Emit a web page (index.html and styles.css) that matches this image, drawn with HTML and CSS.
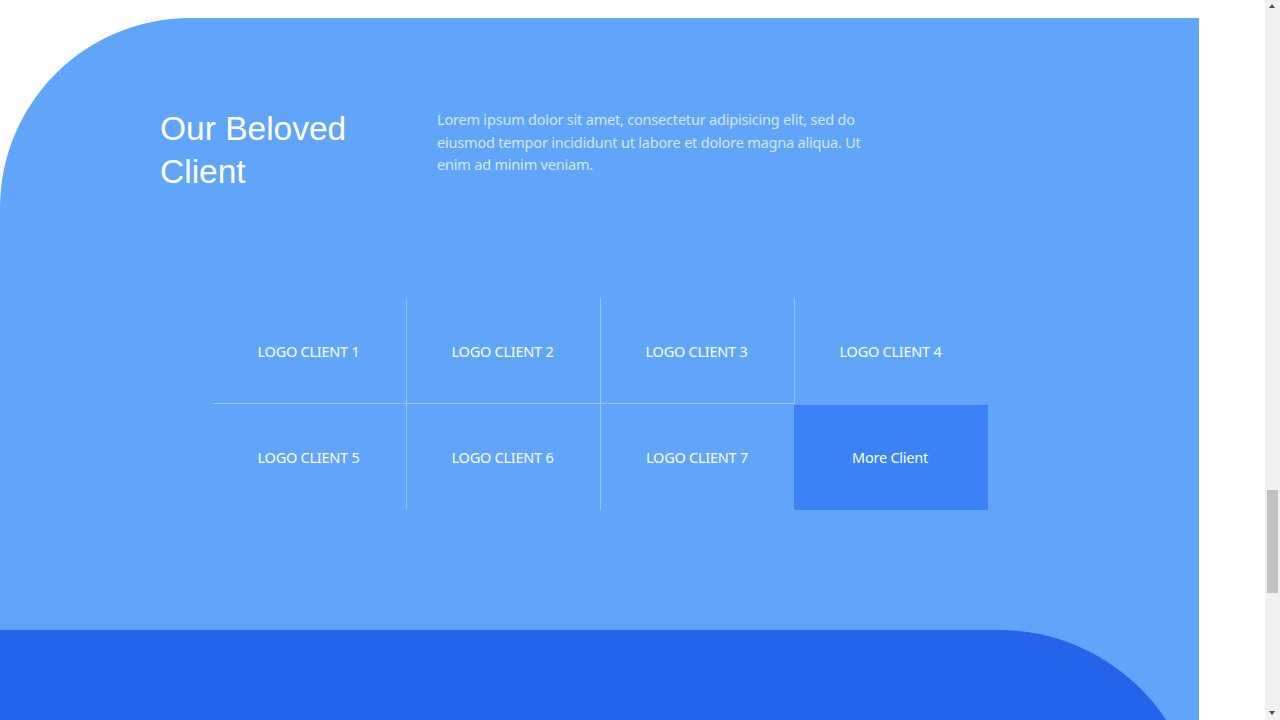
FILE: index.html
```html
<!DOCTYPE html>
<html lang="en">
<head>
<meta charset="utf-8">
<title>Our Beloved Client</title>
<link rel="stylesheet" href="styles.css">
</head>
<body>
  <div class="page">
    <div class="band">
      <section class="clients">
        <div class="clients-head">
          <h2 class="clients-title">Our Beloved Client</h2>
          <p class="clients-text">Lorem ipsum dolor sit amet, consectetur adipisicing elit, sed do eiusmod tempor incididunt ut labore et dolore magna aliqua. Ut enim ad minim veniam.</p>
        </div>
        <div class="logo-grid">
          <div class="logo-cell br bb">LOGO CLIENT 1</div>
          <div class="logo-cell br bb">LOGO CLIENT 2</div>
          <div class="logo-cell br bb">LOGO CLIENT 3</div>
          <div class="logo-cell">LOGO CLIENT 4</div>
          <div class="logo-cell br">LOGO CLIENT 5</div>
          <div class="logo-cell br">LOGO CLIENT 6</div>
          <div class="logo-cell">LOGO CLIENT 7</div>
          <div class="logo-cell more">More Client</div>
        </div>
      </section>
      <section class="next"></section>
    </div>
  </div>
  <div class="scrollbar" aria-hidden="true">
    <span class="sb-arrow sb-up"></span>
    <span class="sb-thumb"></span>
    <span class="sb-arrow sb-down"></span>
  </div>
</body>
</html>
```
FILE: styles.css
```css
html, body {
  margin: 0;
  padding: 0;
  background: #ffffff;
}

.page {
  padding-top: 18px;
}

.band {
  width: 1199px;
  background: #60a5fa;
  border-top-left-radius: 190px;
}

.clients {
  padding: 89px 0 120px 160px;
}

.clients-head {
  width: 880px;
  display: flex;
  align-items: flex-start;
  gap: 27px;
}

.clients-title {
  flex: 0 0 250px;
  margin: 0;
  font-family: "Liberation Sans", Arial, sans-serif;
  font-weight: 400;
  font-size: 33.5px;
  line-height: 43px;
  color: #ffffff;
}

.clients-text {
  margin: 1px 0 0;
  width: 440px;
  font-family: "Noto Sans", "Open Sans", sans-serif;
  font-size: 14.5px;
  line-height: 22.5px;
  letter-spacing: -0.2px;
  color: #d6e7fc;
}

.logo-grid {
  width: 775px;
  margin: 105px 0 0 53px;
  display: grid;
  grid-template-columns: 194px 194px 194px 193px;
  grid-auto-rows: 106px;
}

.logo-cell {
  display: flex;
  align-items: center;
  justify-content: center;
  padding-right: 2px;
  font-family: "Noto Sans", "Open Sans", sans-serif;
  font-size: 14.5px;
  letter-spacing: -0.25px;
  color: #ffffff;
  box-sizing: border-box;
}

.br {
  border-right: 1px solid rgba(255, 255, 255, 0.35);
}

.bb {
  border-bottom: 1px solid rgba(255, 255, 255, 0.35);
}

.more {
  background: #3b82f6;
  margin: 1px 0 0 -1px;
  padding-bottom: 1px;
}

.next {
  height: 400px;
  background: #2563eb;
  border-top-right-radius: 200px;
}

.scrollbar {
  position: fixed;
  top: 0;
  right: 0;
  width: 15px;
  height: 100vh;
  background: #f1f1f1;
}

.sb-thumb {
  position: absolute;
  left: 2px;
  top: 490px;
  width: 11px;
  height: 103px;
  background: #c1c1c1;
}

.sb-arrow {
  position: absolute;
  left: 4px;
  width: 0;
  height: 0;
  border-left: 3.5px solid transparent;
  border-right: 3.5px solid transparent;
}

.sb-up {
  top: 4px;
  border-bottom: 4px solid #505050;
}

.sb-down {
  bottom: 5px;
  border-top: 4px solid #505050;
}
```
